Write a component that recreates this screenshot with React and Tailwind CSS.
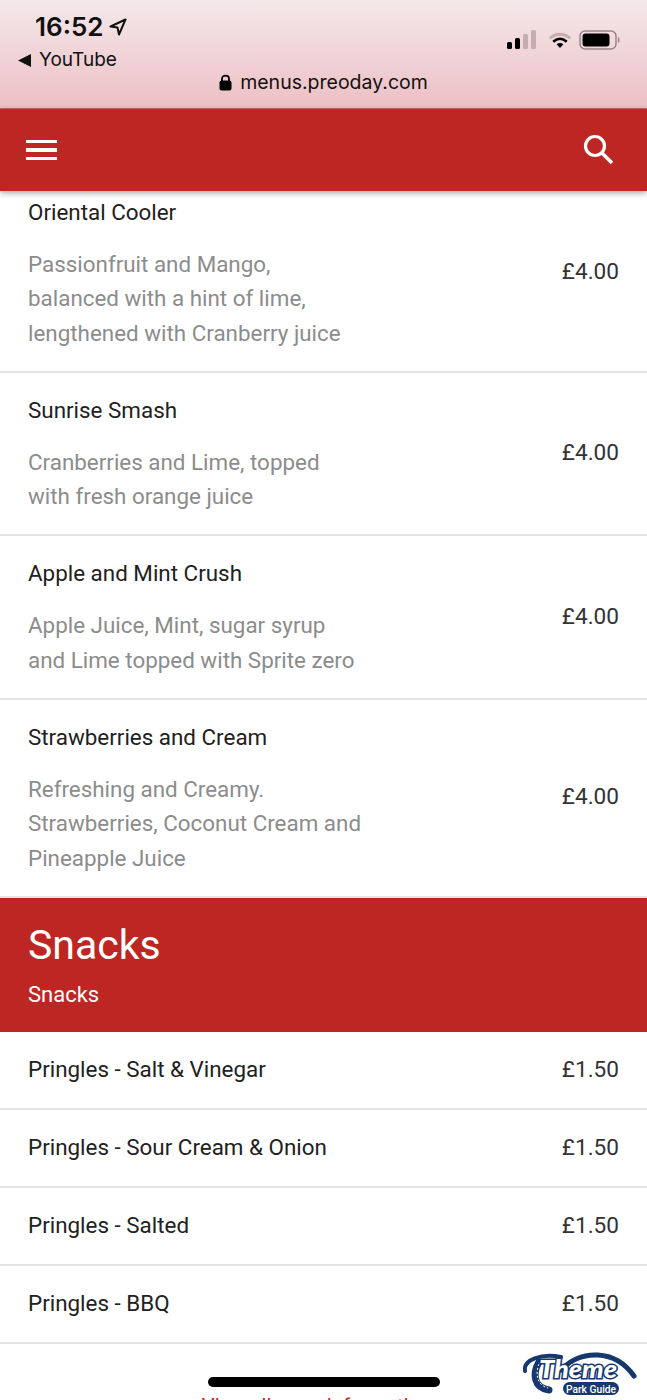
import React from "react";

const drinks = [
  { name: "Oriental Cooler", lines: ["Passionfruit and Mango,", "balanced with a hint of lime,", "lengthened with Cranberry juice"] },
  { name: "Sunrise Smash", lines: ["Cranberries and Lime, topped", "with fresh orange juice"] },
  { name: "Apple and Mint Crush", lines: ["Apple Juice, Mint, sugar syrup", "and Lime topped with Sprite zero"] },
  { name: "Strawberries and Cream", lines: ["Refreshing and Creamy.", "Strawberries, Coconut Cream and", "Pineapple Juice"] },
];

const snacks = ["Pringles - Salt & Vinegar", "Pringles - Sour Cream & Onion", "Pringles - Salted", "Pringles - BBQ"];

function StatusIcons() {
  return (
    <div className="flex items-center">
      <svg width="30" height="20" viewBox="0 0 30 20" className="mr-[12px]">
        <rect x="0" y="12" width="5" height="7" rx="1.5" fill="#000" />
        <rect x="8" y="8" width="5" height="11" rx="1.5" fill="#000" />
        <rect x="16" y="4" width="5" height="15" rx="1.5" fill="#c4aeb1" />
        <rect x="24" y="0" width="5" height="19" rx="1.5" fill="#c4aeb1" />
      </svg>
      <svg width="22" height="17" viewBox="0 0 26 20" className="mr-[8px]">
        <path d="M1 7.5C8 1 18 1 25 7.5" fill="none" stroke="#c4aeb1" strokeWidth="3.5" />
        <path d="M5 11.5C10 7 16 7 21 11.5" fill="none" stroke="#000" strokeWidth="3" />
        <path d="M9 14.5C11.5 12.6 14.5 12.6 17 14.5L13 19Z" fill="#000" />
      </svg>
      <svg width="42" height="20" viewBox="0 0 42 20">
        <rect x="1" y="1" width="36" height="18" rx="5" fill="none" stroke="#9a8488" strokeWidth="1.5" />
        <rect x="3.5" y="3.5" width="27" height="13" rx="3" fill="#000" />
        <path d="M39 7C41 7.5 41 12.5 39 13Z" fill="#9a8488" />
      </svg>
    </div>
  );
}

function TopBar() {
  return (
    <div className="h-[109px] bg-gradient-to-b from-[#f4e9eb] to-[#ecbfc4] border-b border-[#c46a6c] font-['Inter',sans-serif] text-[#111]">
      <div className="flex justify-between pl-[35px] pr-[26px] pt-[8px]">
        <div className="flex items-center gap-[6px] self-start pt-[4px]">
          <span className="text-[26px] leading-[30px] font-semibold">16:52</span>
          <svg width="18" height="18" viewBox="0 0 18 18">
            <path d="M16.5 1.5L1.5 8.5L8.5 9.5L10 16.5Z" fill="none" stroke="#111" strokeWidth="2" strokeLinejoin="round" />
          </svg>
        </div>
        <div className="pt-[22px]">
          <StatusIcons />
        </div>
      </div>
      <div className="flex items-center pl-[18px] -mt-[4px] h-[28px]">
        <svg width="13" height="13" viewBox="0 0 13 13" className="mr-[8px]">
          <path d="M0 6.5L13 0V13Z" fill="#111" />
        </svg>
        <span className="text-[19px] leading-[24px]">YouTube</span>
      </div>
      <div className="flex items-center justify-center -mt-[5px] h-[26px]">
        <svg width="13" height="17" viewBox="0 0 13 17" className="mr-[8px]">
          <rect x="0.5" y="6.5" width="12" height="10" rx="2" fill="#000" />
          <path d="M3 7V4.5C3 0.7 10 0.7 10 4.5V7" fill="none" stroke="#000" strokeWidth="1.8" />
        </svg>
        <span className="text-[19.5px] leading-[24px]">menus.preoday.com</span>
      </div>
    </div>
  );
}

function Header() {
  return (
    <div className="relative z-10 h-[82px] bg-[#be2623] shadow-[0_2px_6px_rgba(0,0,0,0.35)] flex items-center justify-between pl-[26px] pr-[33px]">
      <div className="flex flex-col gap-[5px] w-[31px]">
        <div className="h-[3.5px] bg-white"></div>
        <div className="h-[3.5px] bg-white"></div>
        <div className="h-[3.5px] bg-white"></div>
      </div>
      <svg width="31" height="31" viewBox="0 0 31 31" className="-mt-[1px]">
        <circle cx="12" cy="12" r="9.5" fill="none" stroke="#fff" strokeWidth="3.2" />
        <path d="M19 19L29 29" stroke="#fff" strokeWidth="3.6" />
      </svg>
    </div>
  );
}

function DrinkRow({ name, lines }) {
  return (
    <div className="flex items-center justify-between border-b-2 border-[#e4e4e4] pl-[28px] pr-[28px] pt-[23px] pb-[20.5px]">
      <div>
        <div className="text-[22.4px] leading-[28px] text-[#212121]">{name}</div>
        <div className="mt-[21px] text-[22.4px] leading-[34.5px] text-[#8c8c8c]">
          {lines.map((line) => (
            <div key={line}>{line}</div>
          ))}
        </div>
      </div>
      <div className="text-[22.6px] leading-[28px] text-[#333] -mt-[3px]">£4.00</div>
    </div>
  );
}

function SnackRow({ name }) {
  return (
    <div className="h-[78px] flex items-center justify-between border-b-2 border-[#e4e4e4] px-[28px] text-[22.4px] text-[#212121]">
      <span>{name}</span>
      <span className="text-[22.6px] text-[#333]">£1.50</span>
    </div>
  );
}

function Logo() {
  return (
    <svg width="114" height="44" viewBox="0 0 114 44" className="absolute right-[10px] bottom-[4px]">
      <path d="M2 19C0 8 18 1 38 5" fill="none" stroke="#17386f" strokeWidth="4" strokeLinecap="round" />
      <path d="M38 18C58 -3 92 -3 111 24" fill="none" stroke="#17386f" strokeWidth="5" strokeLinecap="round" />
      <path d="M44 16C60 3 88 3 104 24" fill="none" stroke="#fff" strokeWidth="1" strokeDasharray="2 2" />
      <path d="M16 10C9 22 11 36 26 38" fill="none" stroke="#17386f" strokeWidth="7" strokeLinecap="round" />
      <path d="M16 12C12 22 14 33 25 36" fill="none" stroke="#fff" strokeWidth="1" strokeDasharray="2 2" />
      <rect x="40" y="30" width="56" height="13" rx="6.5" fill="#17386f" />
      <text x="16" y="26" fontFamily="'Lato',sans-serif" fontStyle="italic" fontWeight="900" fontSize="25" fill="#fff" stroke="#17386f" strokeWidth="3" paintOrder="stroke" textLength="78" lengthAdjust="spacingAndGlyphs">Theme</text>
      <text x="43" y="41" fontFamily="'Roboto',sans-serif" fontWeight="500" fontSize="10.5" fill="#fff" textLength="50" lengthAdjust="spacingAndGlyphs">Park Guide</text>
    </svg>
  );
}

export default function App() {
  return (
    <div className="relative h-[1400px] w-[647px] overflow-hidden bg-white font-['Roboto',sans-serif]">
      <TopBar />
      <Header />
      <div className="-mt-[16.5px]">
        {drinks.map((item) => (
          <DrinkRow key={item.name} name={item.name} lines={item.lines} />
        ))}
        <div className="bg-[#be2623] text-white pl-[28px] h-[134px] pt-[20px]">
          <div className="text-[41px] leading-[54px]">Snacks</div>
          <div className="text-[22px] leading-[28px] mt-[9px]">Snacks</div>
        </div>
        {snacks.map((name) => (
          <SnackRow key={name} name={name} />
        ))}
        <div className="pt-[51px] pr-[14px] text-center text-[20.2px] leading-[22px] text-[#be2623]">View allergen information</div>
      </div>
      <div className="absolute left-[208px] top-[1377px] h-[10px] w-[232px] rounded-full bg-black"></div>
      <Logo />
    </div>
  );
}
